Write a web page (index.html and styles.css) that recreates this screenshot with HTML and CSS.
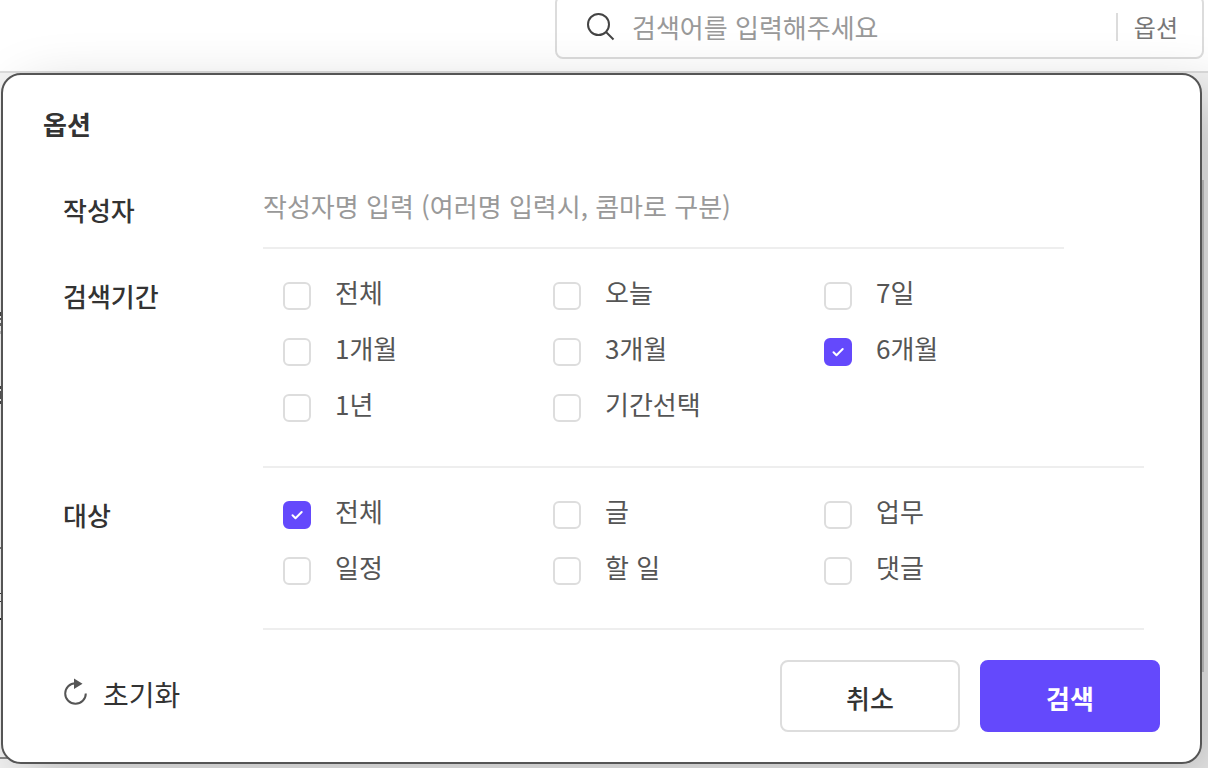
FILE: index.html
```html
<!DOCTYPE html>
<html lang="ko">
<head>
<meta charset="utf-8">
<meta name="viewport" content="width=device-width, initial-scale=1">
<title>검색 옵션</title>
<link rel="stylesheet" href="styles.css">
</head>
<body>
<header class="topbar">
  <div class="search-box" role="search">
    <svg class="search-icon" viewBox="0 0 30 30" aria-hidden="true"><circle cx="12.5" cy="12.5" r="10.5"/><path d="M20 20 27.5 27.5"/></svg>
    <input class="search-input" type="search" aria-label="검색어" placeholder="검색어를 입력해주세요">
    <button class="option-toggle" type="button">옵션</button>
  </div>
</header>
<main class="page">
  <form class="panel">
    <h1 class="panel-title">옵션</h1>
    <div class="row row-author">
      <label class="row-label" for="author">작성자</label>
      <input class="author-input" id="author" type="text" placeholder="작성자명 입력 (여러명 입력시, 콤마로 구분)">
    </div>
    <div class="row row-period" role="group" aria-labelledby="period-label">
      <span class="row-label" id="period-label">검색기간</span>
      <div class="choices">
        <label class="choice"><input class="check" type="checkbox">전체</label>
        <label class="choice"><input class="check" type="checkbox">오늘</label>
        <label class="choice"><input class="check" type="checkbox">7일</label>
        <label class="choice"><input class="check" type="checkbox">1개월</label>
        <label class="choice"><input class="check" type="checkbox">3개월</label>
        <label class="choice"><input class="check" type="checkbox" checked>6개월</label>
        <label class="choice"><input class="check" type="checkbox">1년</label>
        <label class="choice"><input class="check" type="checkbox">기간선택</label>
      </div>
    </div>
    <div class="row" role="group" aria-labelledby="target-label">
      <span class="row-label" id="target-label">대상</span>
      <div class="choices">
        <label class="choice"><input class="check" type="checkbox" checked>전체</label>
        <label class="choice"><input class="check" type="checkbox">글</label>
        <label class="choice"><input class="check" type="checkbox">업무</label>
        <label class="choice"><input class="check" type="checkbox">일정</label>
        <label class="choice"><input class="check" type="checkbox">할 일</label>
        <label class="choice"><input class="check" type="checkbox">댓글</label>
      </div>
    </div>
    <div class="actions">
      <button class="reset" type="reset">
        <svg class="reset-icon" viewBox="0 0 26 28" aria-hidden="true"><path class="arc" d="M12.5 5.2a10.3 10.3 0 1 0 10.3 10.3"/><path class="head" d="M11 0.5 19.5 5.7 11 11Z"/></svg>
        초기화
      </button>
      <button class="button" type="button">취소</button>
      <button class="button button-primary" type="submit">검색</button>
    </div>
  </form>
</main>
</body>
</html>
```
FILE: styles.css
```css
* {
  box-sizing: border-box;
}

body {
  display: flex;
  flex-direction: column;
  min-height: 100vh;
  margin: 0;
  overflow: hidden;
  background: #f3f3f3;
  color: #333;
  font: 26px/38px "Noto Sans CJK KR", sans-serif;
}

button,
input {
  margin: 0;
  padding: 0;
  border: 0;
  background: none;
  color: inherit;
  font: inherit;
}

.topbar {
  display: flex;
  align-items: flex-end;
  justify-content: flex-end;
  height: 73px;
  padding: 0 4px 12px;
  border-bottom: 2px solid #dcdcdc;
  background: #fff;
}

.search-box {
  display: flex;
  align-items: center;
  width: 54%;
  min-width: 649px;
  height: 64px;
  padding: 0 24px 0 29px;
  border: 2px solid #dcdcdc;
  border-radius: 8px;
}

.search-icon {
  flex: none;
  width: 30px;
  height: 30px;
  margin-right: 16px;
  fill: none;
  stroke: #444;
  stroke-width: 2;
}

.search-input {
  flex: 1;
  min-width: 0;
  height: 38px;
  outline: none;
}

.search-input::placeholder,
.author-input::placeholder {
  color: #999;
  opacity: 1;
}

.option-toggle {
  height: 28px;
  padding-left: 16px;
  border-left: 2px solid #dcdcdc;
  color: #777;
  font-size: 24px;
  line-height: 28px;
}

/* Edges of the feed and the scrollbar thumb that show beside the panel */
.page {
  flex: 1;
  padding: 0 6px 4px 1px;
  background:
    linear-gradient(#c8c8c8, #c8c8c8) right 4px top 107px / 12px 492px no-repeat,
    linear-gradient(#888, #888) 0 684px / 20px 2px no-repeat,
    linear-gradient(
      transparent 239px, #444 239px 243px, transparent 243px 245px,
      #666 245px 247px, transparent 247px 250px, #666 250px 253px,
      transparent 253px 258px, #bbb 258px 261px, transparent 261px 313px,
      #444 313px 316px, transparent 316px 318px, #555 318px 326px,
      transparent 326px 328px, #444 328px 331px, transparent 331px 474px,
      #777 474px 476px, transparent 476px 520px, #333 520px 521px,
      transparent 521px 528px, #333 528px 529px, transparent 529px 545px,
      #222 545px 547px, transparent 547px
    ) 0 0 / 1px 100% no-repeat;
}

.panel {
  position: relative;
  padding: 30px 40px 30px;
  border: 2px solid #555;
  border-radius: 20px;
  background: #fff;
  box-shadow: 20px 20px 60px rgba(0, 0, 0, 0.22);
}

.panel-title {
  margin: 0;
  font-size: 26px;
  font-weight: 700;
  line-height: 38px;
}

.row {
  display: flex;
  padding: 24px 16px 0 20px;
}

.row-author {
  padding: 42px 96px 0 20px;
}

.row-label {
  flex: none;
  width: 200px;
  padding-top: 4px;
  font-weight: 500;
}

.author-input {
  flex: 1;
  min-width: 0;
  height: 64px;
  padding-bottom: 22px;
  border-bottom: 2px solid #eee;
  outline: none;
}

.row-author .row-label {
  padding-top: 6px;
}

.choices {
  flex: 1;
  display: grid;
  grid-template-columns: 270px 271px 1fr;
  row-gap: 18px;
  padding: 0 20px 42px;
  border-bottom: 2px solid #eee;
}

.row-period .choices {
  padding-bottom: 43px;
}

.choice {
  display: flex;
  color: #555;
}

.check {
  appearance: none;
  flex: none;
  width: 28px;
  height: 28px;
  margin: 9px 24px 0 0;
  border: 2px solid #ddd;
  border-radius: 6px;
}

.check:checked {
  border-color: #6449fc;
  background: #6449fc url("data:image/svg+xml,%3Csvg xmlns='http://www.w3.org/2000/svg' viewBox='0 0 24 24'%3E%3Cpath d='M7.5 12.2 10.5 15.2 16.7 9' fill='none' stroke='white' stroke-width='2' stroke-linecap='round' stroke-linejoin='round'/%3E%3C/svg%3E") center / 24px 24px no-repeat;
}

.actions {
  display: flex;
  gap: 20px;
  padding-top: 30px;
}

.reset {
  display: flex;
  align-items: center;
  gap: 14px;
  height: 72px;
  margin-right: auto;
  padding: 0 0 4px 20px;
  font-size: 28px;
}

.reset-icon {
  width: 26px;
  height: 28px;
  margin-bottom: 4px;
}

.arc {
  fill: none;
  stroke: #555;
  stroke-width: 2;
}

.head {
  fill: #555;
}

.button {
  width: 180px;
  height: 72px;
  padding-top: 4px;
  border: 2px solid #ddd;
  border-radius: 8px;
  font-weight: 500;
}

.button-primary {
  border-color: #6449fc;
  background: #6449fc;
  color: #fff;
  font-weight: 700;
}
```
